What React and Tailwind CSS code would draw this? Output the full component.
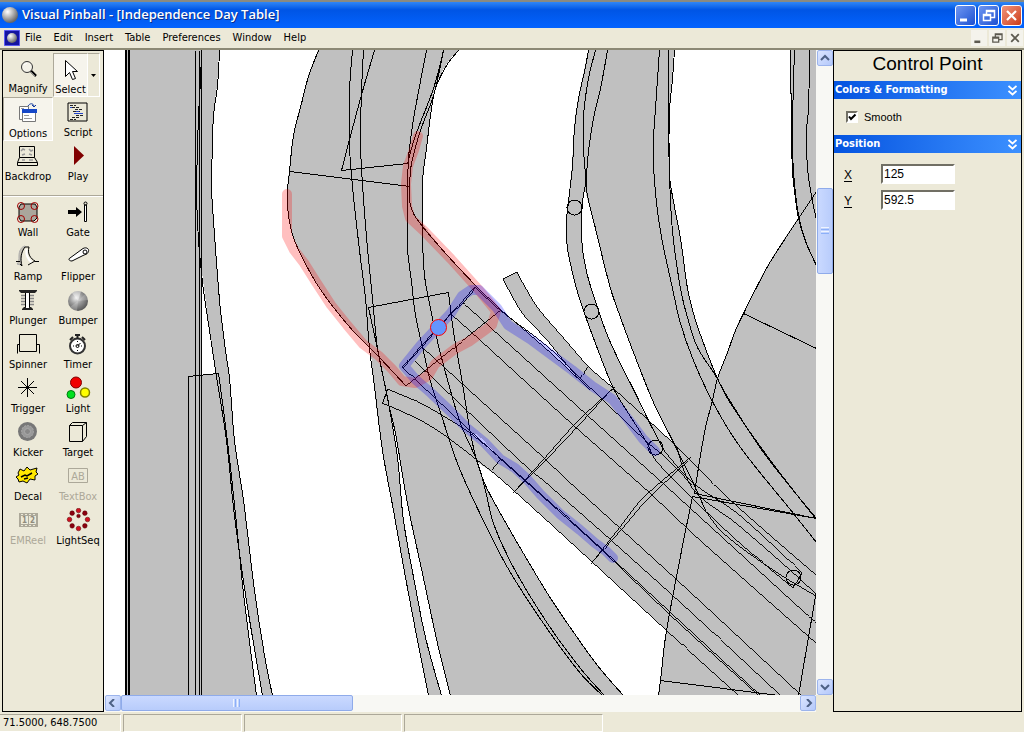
import React, { useState } from "react";

const ink = { fill: "none", stroke: "#000", strokeWidth: 1 };

// white areas between the table parts
const gaps = [
	"104,50 125,50 125,695 104,695",
	"219,50 217,85 213,115 212,145 211,185 213,220 217,275 220,310 225,350 229,378 234,440 243,500 254,590 264,655 272,695 428,695 418,645 405,577 393,510 382,450 373,378 371,350 353,331 330,303 313,278 294,240 288,215 287,191 289,171 293,135 301,103 308,76 318,50",
	"202,272 209,325 216,374 202,375",
	"241,567 248,613 262,695 256,695 243,593",
	"388,403 397,457 403,520 415,587 425,637 441,695 450,695 437,643 422,573 407,503 395,433",
	"458,50 448,62 440,76 434,91 430,115 426,148 422,181 422,223 447,255 475,285 501,310 547,349 578,378 563,360 547,340 530,322 520,310 503,279 517,272 525,287 538,308 567,342 589,367 613,388 595,343 583,310 576,288 567,248 566,221 568,201 572,165 574,128 578,98 584,71 588,50",
	"585,190 582,201 581,225 582,248 586,271 592,292 605,330 615,353 637,397 647,418 673,443 653,402 633,352 620,317 610,288 595,228",
	"674,50 672,78 669,111 669,175 673,201 680,238 687,288 693,313 702,340 717,378 727,352 735,330 743,313 757,285 770,261 798,218 795,198 792,171 791,128 790,50",
	"477,462 502,480 590,560 666,630 660,680 658,695 623,695 597,665 567,623 547,593 523,553 500,513 485,485",
	"470,433 476,434 487,444 499,457 484,445",
];

const rails = [
	// left rails
	"195,50 195,695",
	"199,50 199,695",
	"201,50 201,695",
	"188,695 188,376 218,373 224,417 230,467 237,533 243,593 256,695",
	"201,50 200,80 198,115 197,150 196,190 198,240 200,262 203,290 209,330 216,376 226,440 233,507 240,560 248,613 262,695",
	"219,50 217,85 213,115 212,145 211,185 213,220 217,275 220,310 225,350 229,378 234,440 243,500 254,590 264,655 272,695",
	// upper loop
	"318,50 308,76 301,103 293,135 289,171 287,191 288,215 294,240 313,278 330,303 353,331 377,355 406,386",
	"475,285 447,255 422,226 413,213 409,200 409,186 411,163 420,130 433,95 443,50",
	"289,171 409,186",
	"374,50 360,98 341,170 407,163 415,135 433,88 443,50",
	"352,50 349,91 349,145 351,175 355,215 360,258 365,298 369,348 373,378 382,450 393,510 405,577 418,645 428,695",
	"363,50 361,91 360,145 363,198 367,248 372,298 377,348 383,378 387,397 397,457 403,520 415,587 425,637 441,695",
	"426,50 418,91 412,125 408,158 407,198 407,248 411,281 415,315 423,351 430,381 440,412 457,463 478,510 507,567 543,623 580,673 602,695",
	"458,50 448,62 440,76 434,91 430,115 426,148 422,181 422,235 424,275 430,308 437,341 448,383 460,423 477,462 485,490 493,523 513,567 547,623 580,668 604,695",
	"450,695 437,643 422,573 407,503 395,433 388,403 379,358 368,307 448,292 453,331 462,383 470,433 477,463 485,485 500,513 523,553 547,593 567,623 597,665 623,695",
	// orbit lane
	"588,50 584,71 578,98 574,128 572,165 568,201 566,221 567,248 576,288 583,310 595,343 613,388 628,413 645,440 653,457",
	"607,50 600,88 593,118 588,151 586,175 586,190 595,228 610,288 620,317 633,352 653,402 672,440 693,483 705,510",
	"595,50 588,78 583,115 583,148 585,181 582,201 581,225 582,248 586,271 592,292 605,330 615,353 637,397 647,418 663,449",
	"659,50 655,108 653,141 654,181 660,231 672,288 680,323 693,360 713,403 740,447 793,513 816,542",
	"668,50 669,171 672,231 680,288 687,317 697,347 715,375 730,403 773,464 816,519",
	"674,50 672,78 669,111 669,175 673,201 680,238 687,288 693,313 702,340 717,378 728,398 763,452 816,518",
	// right wall
	"790,50 791,128 792,171 795,198 798,218 805,241 816,265",
	"794,50 792,128 793,171 798,215 806,243 816,264",
	"809,50 808,108 806,131 807,168 811,195 816,220",
	"816,191 798,218 770,261 757,285 743,313 735,330 727,352 717,378 712,400 705,427 698,467 694,493 816,518 692,496 666,630 660,680 658,695",
	"743,313 816,348",
	"660,680 778,695",
	"816,590 798,695",
	"382,403 387,389",
];

const ramp = [
	// guide below the ramp
	"500,458 470,433 450,420 420,403 387,389",
	"382,403 420,420 447,437 477,460 502,480 590,560 666,630 738,695",
	"500,460 492,470",
	"402,367 475,287",
	"403,368 422,347 451,314 463,303 475,288",
	"406,386 501,310",
	"475,285 501,310",
	"475,287 501,311 547,346 580,378 603,400 648,443 664,456 692,485",
	"501,310 553,355 590,390",
	"463,303 480,318 587,415 667,487 816,623",
	"451,314 480,340 573,425 650,493 692,533 816,643",
	"422,347 480,400 543,457 567,480 677,580 801,695",
	"415,361 480,423 530,470 543,480 670,593 780,695",
	"402,367 480,440 498,456 570,520 603,550 670,612 760,695",
	"498,457 570,521 603,551 668,613 758,695",
	"615,387 577,422 543,460 513,493",
	"612,389 580,424 545,461 515,491",
	"691,457 643,498 620,527 591,564",
	"688,461 645,502 622,529 593,561",
	// guide above the ramp
	"578,378 563,360 547,340 530,322 520,310 503,279 517,272 525,287 538,308 567,342 589,367 613,388 647,419 675,445 727,497 816,575",
	"588,367 580,378",
	"653,457 667,473 733,537 793,588 802,573 737,513 693,483 663,449",
	"705,510 723,533 773,570 816,596",
	"677,447 693,489 737,524 790,570 816,594",
];

const posts = [
	[574, 207],
	[591, 311],
	[655, 447],
	[793, 577],
];

// rounds gentle bends between points, keeps sharp corners sharp
function curve(str) {
	const pts = str.split(" ").map((p) => p.split(",").map(Number));
	const tangents = pts.map((p, i) => {
		const a = pts[i - 1];
		const b = pts[i + 1];
		if (!a || !b) return null;
		const turn = Math.atan2(b[1] - p[1], b[0] - p[0]) - Math.atan2(p[1] - a[1], p[0] - a[0]);
		if (Math.cos(turn) < 0.82) return null;
		const len = Math.hypot(b[0] - a[0], b[1] - a[1]);
		return [(b[0] - a[0]) / len, (b[1] - a[1]) / len];
	});
	let d = `M${pts[0]}`;
	for (let i = 1; i < pts.length; i++) {
		const [p, q] = [pts[i - 1], pts[i]];
		const k = Math.hypot(q[0] - p[0], q[1] - p[1]) / 3;
		const s = tangents[i - 1] || [0, 0];
		const e = tangents[i] || [0, 0];
		d += `C${p[0] + s[0] * k},${p[1] + s[1] * k} ${q[0] - e[0] * k},${q[1] - e[1] * k} ${q}`;
	}
	return d;
}

function TableCanvas() {
	return (
		<svg
			viewBox="104 50 712 645"
			preserveAspectRatio="xMinYMin slice"
			className="block h-full w-full bg-[#c0c0c0]"
			role="img"
			aria-label="Table layout">
			<g shapeRendering="crispEdges">
				{gaps.map((p) => (
					<path key={p} d={curve(p) + "Z"} fill="#fff" />
				))}
				<path d="M126 50V695M129 50V695" stroke="#000" strokeWidth="2" />
				<g transform="translate(0.5 0.5)" {...ink}>
					{rails.map((p) => (
						<path key={p} d={curve(p)} />
					))}
					{posts.map(([x, y]) => (
						<circle key={x} cx={x} cy={y} r="7.5" />
					))}
				</g>
				<g {...ink} strokeWidth="0.95">
					{ramp.map((p) => (
						<path key={p} d={curve(p)} />
					))}
				</g>
			</g>
			<g fill="none" strokeWidth="10" strokeLinecap="round" strokeLinejoin="round" opacity="0.25">
				<path
					stroke="#f00"
					d="M287 194V236L294 250 304 263 316 282 331 305 347 325 363 344 379 356 392 369 402 381 415 383 428 376 435 364 455 349 470 341 492 325 496 311 478 289 451 259 424 231 410 218 407 206 406 184 408 166 414 150 418 136"
				/>
			</g>
			<g fill="none" strokeWidth="10" strokeLinecap="round" strokeLinejoin="round" opacity="0.25">
				<path
					stroke="#00f"
					d="M655 451L643 439 628 419 612 399 592 386 572 370 553 356 530 339 508 325 497 308 479 290 471 290 462 296 451 313 436 329 421 345 404 366 416 380 431 393 450 411 467 428 484 442 500 459 515 468 527 479 540 494 560 514 580 530 595 543 606 551 613 558"
				/>
			</g>
			<circle cx="438.5" cy="327.5" r="8" fill="#6495ff" stroke="#f00" />
		</svg>
	);
}

const icons = {
	Magnify: (
		<>
			<circle cx="14" cy="11" r="5.5" fill="#f4f2e8" stroke="#333" />
			<path d="M11 9l3-2" stroke="#fff" />
			<path d="M18 15l5 5" stroke="#000" strokeWidth="2.5" />
			<path d="M18 16l4 4" stroke="#888" />
		</>
	),
	Select: <path d="M9.5 3.5v16l4-4 3 7 3-1-3-7h5z" fill="#fff" stroke="#000" />,
	Options: (
		<>
			<path d="M6.5 5.5h9v13h-9z" fill="#fff" stroke="#777" />
			<path d="M9.5 9.5h13v11h-13z" fill="#fff" stroke="#777" />
			<path d="M9 8h15v4H9z" fill="#1648c8" />
			<path d="M11 14.5h5M11 17.5h8M8 7.5h3" stroke="#999" />
			<path d="M15 5c2-3 5-3 6 0m-2-1l2 2 2-2" fill="none" stroke="#123a9c" />
		</>
	),
	Script: (
		<>
			<path d="M5 3h19v18H5z" {...ink} />
			<path d="M7 5.5h6M9 7.5h7M12 9.5h8M10 11.5h7M13 15.5h8M9 17.5h7M7 19.5h6" stroke="#222" strokeDasharray="3 1" />
			<path d="M7 7.5h2M13 11.5h3M11 13.5h9" stroke="#24c" />
		</>
	),
	Backdrop: (
		<>
			<path d="M6.5 2.5h15v11h-15zM6.5 13.5l-2 5v3h20v-3l-3-5M4.5 18.5h20" {...ink} />
			<path d="M8 7l2-2 2 1M16 5l2 2 2-1M9 11l3-1M16 10l3 1M9 16h3M16 16h4" fill="none" stroke="#999" strokeWidth="1.5" />
		</>
	),
	Play: <path d="M11 2v19l10-9.5z" fill="#800000" />,
	Wall: (
		<>
			<path d="M8 4h14l2 3v11l-3 3H8l-2-3V7z" fill="#aaa69c" stroke="#000" />
			<g fill="none" stroke="#a00000">
				<circle cx="8" cy="6" r="3.5" />
				<circle cx="21.5" cy="6" r="3.5" />
				<circle cx="8" cy="19" r="3.5" />
				<circle cx="21.5" cy="19" r="3.5" />
			</g>
		</>
	),
	Gate: (
		<>
			<path d="M5 10h8V7l6 5-6 5v-3H5z" fill="#000" />
			<path d="M21.5 5v16.5h2V5z" fill="#fff" stroke="#000" />
			<circle cx="22.5" cy="3.5" r="1.5" {...ink} />
		</>
	),
	Ramp: (
		<>
			<path d="M12 2C8 3 6 7 6 12c0 4 0 6-2 8l4 1c-1-6 0-13 4-19z" fill="#c5c1b4" stroke="#aaa" />
			<path d="M3 17.5h4M12 3c-4 5-5 12-3 19M9 22l-2-2M12 3h4c-2 7 2 12 6 14l-7 4M22 17.5h4" {...ink} />
			<path d="M13.5 5c-1 6 2 11 5 13" fill="none" stroke="#fff" strokeWidth="2" />
		</>
	),
	Flipper: (
		<>
			<path d="M7 14L20 4.5c4-2 7 1 5 4-1 2-3 2-5 3L9 17c-3 0-4-2-2-3z" fill="#fff" stroke="#000" />
			<circle cx="22" cy="8" r="2" {...ink} />
		</>
	),
	Plunger: (
		<>
			<path d="M6 2h18v1l-2 2H8L6 3zM9 22h11v-1l-2-2h-7l-2 2z" fill="#222" />
			<path d="M8 7.5h13M8 10.5h13M8 13.5h13M8 16.5h13" stroke="#888" strokeWidth="1.5" />
			<path d="M14.5 5v15" stroke="#fff" strokeWidth="3" />
			<path d="M12.5 5v14M16.5 5v14" stroke="#000" />
		</>
	),
	Bumper: (
		<>
			<defs>
				<radialGradient id="cap" cx="0.4" cy="0.35" r="0.65">
					<stop offset="0" stopColor="#f0f0f0" />
					<stop offset="0.5" stopColor="#999" />
					<stop offset="1" stopColor="#5a5a5a" />
				</radialGradient>
			</defs>
			<circle cx="15" cy="13" r="10" fill="url(#cap)" />
			<path d="M15 13L9 5A10 10 0 0 1 18 3.500z" fill="#fff" opacity="0.4" />
			<path d="M15 13L22 6A10 10 0 0 1 25 12z" fill="#fff" opacity="0.2" />
			<path d="M15 13L14 23A10 10 0 0 1 7 19z" fill="#fff" opacity="0.2" />
		</>
	),
	Spinner: <path d="M6.5 2.5h17v17h-17zM6.5 12.5h-2v9M23.5 12.5h3v9" {...ink} />,
	Timer: (
		<>
			<circle cx="14.5" cy="14" r="7.5" fill="#fff" stroke="#333" strokeWidth="2" />
			<path d="M12 3h5M14.5 2v5M7 8l3-3M22 8l-3-3" stroke="#222" strokeWidth="2" />
			<path d="M14.5 9v1M14.5 18v1M10 14h1M18 14h1M14.5 14l3-3" stroke="#000" />
			<circle cx="14.5" cy="14" r="1.5" {...ink} />
		</>
	),
	Trigger: <path d="M14.5 2v19M5 11.5h19M8 5l13 13M21 5L8 18" {...ink} />,
	Light: (
		<>
			<circle cx="13" cy="6.5" r="5.5" fill="#f00000" stroke="#800000" />
			<circle cx="8" cy="18.5" r="4" fill="#00e020" stroke="#007a10" />
			<circle cx="22" cy="16.5" r="4.5" fill="#ff0" stroke="#808000" strokeWidth="1.5" />
		</>
	),
	Kicker: (
		<>
			<circle cx="14.5" cy="11.5" r="9.5" fill="#777" />
			<circle cx="14.5" cy="11.5" r="6" fill="#999" stroke="#aaa" strokeDasharray="2 1" />
			<circle cx="14.5" cy="11.5" r="3" fill="#888" stroke="#aaa" />
		</>
	),
	Target: <path d="M6.5 5.5h13v16h-13zM6.5 5.5l3-3h14l-4 3M23.5 2.5v14l-4 5" {...ink} />,
	Decal: (
		<>
			<path d="M5 9l2-4 4 2 3-4 3 3 7-2-1 4 2 2-3 2 0 4-5-1-3 4-4-2-4 1-1-3-2-2 3-2z" fill="#ffe800" stroke="#000" />
			<path d="M8 13l4-2 2 1 5-3M11 15l4-1" {...ink} strokeWidth="1.5" />
		</>
	),
	TextBox: (
		<>
			<path d="M5.5 4.5h19v14h-19z" fill="none" stroke="#aca899" />
			<text x="15" y="16" textAnchor="middle" fontSize="11" fill="#aca899">
				AB
			</text>
		</>
	),
	EMReel: (
		<>
			<path d="M6 5h19v14H6z" fill="#aca899" />
			<path d="M8 8h7v8H8zM16 8h7v8h-7z" fill="#ece9d8" />
			<path d="M8 6.5h16M8 17.5h16" stroke="#ece9d8" strokeDasharray="2 2" />
			<text x="11.5" y="15" textAnchor="middle" fontSize="8" fontWeight="bold" fill="#8f8b7d">
				1
			</text>
			<text x="19.5" y="15" textAnchor="middle" fontSize="8" fontWeight="bold" fill="#8f8b7d">
				2
			</text>
		</>
	),
	LightSeq: (
		<g fill="#8b0010" stroke="#500" strokeWidth="0.5">
			{[0, 1, 2, 3, 4, 5, 6, 7].map((i) => (
				<circle
					key={i}
					cx={15.5 + 9 * Math.cos((i * Math.PI) / 4)}
					cy={11.5 + 9 * Math.sin((i * Math.PI) / 4)}
					r="2.3"
					fill={i % 2 ? "#8b0010" : "#d01020"}
				/>
			))}
			<circle cx="15.5" cy="8" r="1.8" />
		</g>
	),
};

const disabledTools = ["TextBox", "EMReel"];

function Tool({ name, className = "" }) {
	const off = disabledTools.includes(name);
	return (
		<button
			type="button"
			disabled={off}
			className={`flex h-11 flex-col items-center pt-[3px] ${off ? "text-[#aca899]" : ""} ${className}`}>
			<svg width="30" height="26" viewBox="0 0 30 26" className="shrink-0" aria-hidden="true">
				{icons[name]}
			</svg>
			<span className="leading-[13px]">{name}</span>
		</button>
	);
}

const parts = [
	"Wall",
	"Gate",
	"Ramp",
	"Flipper",
	"Plunger",
	"Bumper",
	"Spinner",
	"Timer",
	"Trigger",
	"Light",
	"Kicker",
	"Target",
	"Decal",
	"TextBox",
	"EMReel",
	"LightSeq",
];

function Toolbar() {
	return (
		<aside className="w-[102px] shrink-0 border border-black bg-[#ece9d8]">
			<div className="grid grid-cols-2 border-b border-[#aca899] pt-0.5 pb-2.5">
				<Tool name="Magnify" />
				<div className="flex">
					<Tool name="Select" className="w-[35px] border border-[#aca899] border-r-white border-b-white bg-[#f6f4ec]" />
					<button
						type="button"
						aria-label="Select options"
						className="flex h-11 w-3 items-center justify-center border border-l-0 border-[#aca899] border-r-white border-b-white">
						<svg width="5" height="3" viewBox="0 0 5 3" aria-hidden="true">
							<path d="M0 0h5L2.5 3z" />
						</svg>
					</button>
				</div>
				<Tool name="Options" className="border border-[#aca899] border-r-white border-b-white bg-[#f6f4ec]" />
				<Tool name="Script" />
				<Tool name="Backdrop" />
				<Tool name="Play" />
			</div>
			<div className="grid grid-cols-2 border-t border-white">
				{parts.map((name) => (
					<Tool key={name} name={name} />
				))}
			</div>
		</aside>
	);
}

const arrows = {
	up: "M2 6l4-4 4 4",
	down: "M2 2l4 4 4-4",
	left: "M7 0L3 4l4 4",
	right: "M5 0l4 4-4 4",
};

function ScrollButton({ dir }) {
	return (
		<button
			type="button"
			aria-label={`Scroll ${dir}`}
			className="flex size-4 shrink-0 items-center justify-center rounded-xs border border-[#9cb4ec] bg-linear-to-br from-[#dce6ff] to-[#b4c8fa]">
			<svg width="12" height="8" viewBox="0 0 12 8" aria-hidden="true">
				<path d={arrows[dir]} fill="none" stroke="#4d6185" strokeWidth="2" />
			</svg>
		</button>
	);
}

function Canvas() {
	return (
		<main className="grid min-w-0 flex-1 grid-cols-[minmax(0,1fr)_17px] grid-rows-[minmax(0,1fr)_17px]">
			<TableCanvas />
			<div className="flex flex-col items-end bg-[#f8f8f4]">
				<ScrollButton dir="up" />
				<div className="grow-[122]" />
				<div className="flex w-4 grow-[85] basis-0 flex-col items-center justify-center gap-px rounded-xs border border-[#8fabea] bg-linear-to-r from-[#cad9ff] to-[#b8ccfb]">
					<i className="h-px w-2 bg-[#eef4fe]" />
					<i className="h-px w-2 bg-[#8cb0f8]" />
					<i className="h-px w-2 bg-[#eef4fe]" />
					<i className="h-px w-2 bg-[#8cb0f8]" />
				</div>
				<div className="grow-[406]" />
				<ScrollButton dir="down" />
			</div>
			<div className="flex items-start bg-[#f8f8f4] pl-px">
				<ScrollButton dir="left" />
				<div className="flex h-4 grow-[231] basis-0 items-center justify-center gap-px rounded-xs border border-[#8fabea] bg-linear-to-b from-[#cad9ff] to-[#b8ccfb]">
					<i className="h-2 w-px bg-[#eef4fe]" />
					<i className="h-2 w-px bg-[#8cb0f8]" />
					<i className="h-2 w-px bg-[#eef4fe]" />
					<i className="h-2 w-px bg-[#8cb0f8]" />
				</div>
				<div className="grow-[449]" />
				<ScrollButton dir="right" />
			</div>
			<div className="bg-[#ece9d8]" />
		</main>
	);
}

function SectionTitle({ children }) {
	return (
		<button
			type="button"
			className="flex h-[18px] w-full items-center justify-between bg-linear-to-r from-[#0453e0] to-[#3c90ff] pr-1 pl-px font-bold text-white">
			{children}
			<svg width="9" height="11" viewBox="0 0 9 11" aria-hidden="true">
				<path d="M0.5 1l4 3.5 4-3.5M0.5 6l4 3.5 4-3.5" fill="none" stroke="#fff" strokeWidth="1.8" />
			</svg>
		</button>
	);
}

function Field({ label, value, onChange }) {
	return (
		<label className="flex h-[26px] items-start font-['Liberation_Sans',sans-serif] text-[12px]">
			<span className="w-[37px] pt-[3px] leading-4 underline underline-offset-2">{label}</span>
			<input
				value={value}
				onChange={(e) => onChange(e.target.value)}
				className="h-5 w-[74px] border-2 border-[#716f64] border-r-white border-b-white bg-white px-px leading-4 outline-none"
			/>
		</label>
	);
}

function Properties() {
	const [smooth, setSmooth] = useState(true);
	const [x, setX] = useState("125");
	const [y, setY] = useState("592.5");

	return (
		<aside className="mr-0.5 w-[189px] shrink-0 border border-black bg-[#ece9d8]">
			<h1 className="h-[30px] text-center font-['Liberation_Sans',sans-serif] text-[19px] leading-[26px]">
				Control Point
			</h1>
			<SectionTitle>Colors &amp; Formatting</SectionTitle>
			<label className="flex h-9 items-center gap-1.5 pl-3 font-['Liberation_Sans',sans-serif]">
				<span className="grid">
					<input
						type="checkbox"
						checked={smooth}
						onChange={(e) => setSmooth(e.target.checked)}
						className="peer col-start-1 row-start-1 size-3 appearance-none border-2 border-[#716f64] border-r-white border-b-white bg-white"
					/>
					<svg
						viewBox="0 0 12 12"
						className="pointer-events-none invisible col-start-1 row-start-1 size-3 peer-checked:visible"
						aria-hidden="true">
						<path d="M3 5.5l2 2.5 4.5-4.5" fill="none" stroke="#000" strokeWidth="2" />
					</svg>
				</span>
				Smooth
			</label>
			<SectionTitle>Position</SectionTitle>
			<div className="pt-[11px] pl-2.5">
				<Field label="X" value={x} onChange={setX} />
				<Field label="Y" value={y} onChange={setY} />
			</div>
		</aside>
	);
}

const glyphs = {
	Minimize: <path d="M4 14h7" strokeWidth="3" />,
	Restore: <path d="M7.5 8V4.5h8v7H12M4.5 8.5h7v6h-7zM4.5 9.5h7M7.5 5.5h8" strokeWidth="1.5" />,
	Close: <path d="M5 5l9 9M14 5l-9 9" strokeWidth="2.2" />,
};

function TitleBar() {
	return (
		<header className="flex h-7 shrink-0 items-center border-t-2 border-[#8a8a80] bg-linear-to-b from-[#2f86f5] via-[#0055e5] via-30% to-[#0363ff] px-0.5 text-white">
			<svg width="18" height="18" viewBox="0 0 18 18" aria-hidden="true">
				<defs>
					<radialGradient id="ball" cx="0.35" cy="0.3" r="0.7">
						<stop offset="0" stopColor="#fff" />
						<stop offset="0.4" stopColor="#c4c4c4" />
						<stop offset="1" stopColor="#666" />
					</radialGradient>
				</defs>
				<circle cx="8" cy="9" r="8" fill="url(#ball)" />
			</svg>
			<span className="flex-1 truncate pl-0.5 font-['Open_Sans','Noto_Sans',sans-serif] text-[13px] font-semibold [text-shadow:1px_1px_0_#0b2f8a]">
				Visual Pinball - [Independence Day Table]
			</span>
			<div className="flex gap-0.5">
				{Object.entries(glyphs).map(([name, glyph]) => (
					<button
						key={name}
						type="button"
						aria-label={name}
						className={`flex size-[21px] items-center justify-center rounded-[3px] border border-white bg-linear-to-br ${
							name === "Close" ? "from-[#f0937a] to-[#cc3a10]" : "from-[#6f96f2] to-[#1c4fd0]"
						}`}>
						<svg width="19" height="19" viewBox="0 0 19 19" fill="none" stroke="#fff" aria-hidden="true">
							{glyph}
						</svg>
					</button>
				))}
			</div>
		</header>
	);
}

function MenuBar() {
	return (
		<nav className="flex h-5 shrink-0 items-center pr-px pl-1">
			<svg width="16" height="16" viewBox="0 0 16 16" className="mr-1" aria-hidden="true">
				<path d="M0.5 0.5h15v15H0.5z" fill="#1414a0" stroke="#5a5af0" />
				<circle cx="8" cy="8" r="5" fill="url(#ball)" />
			</svg>
			<div className="flex flex-1">
				{["File", "Edit", "Insert", "Table", "Preferences", "Window", "Help"].map((item) => (
					<button key={item} type="button" className="px-1.5 first:pl-px">
						{item}
					</button>
				))}
			</div>
			<div className="flex gap-0.5">
				{Object.entries(glyphs).map(([name, glyph]) => (
					<button
						key={name}
						type="button"
						aria-label={`${name} table`}
						className="flex size-4 items-center justify-center bg-[#f4f3ec]">
						<svg width="16" height="16" viewBox="0 0 19 19" fill="none" stroke="#5c5a50" aria-hidden="true">
							{glyph}
						</svg>
					</button>
				))}
			</div>
		</nav>
	);
}

function StatusBar() {
	const pane = "h-[18px] border border-[#aca899] border-r-white border-b-white";
	return (
		<footer className="flex shrink-0 gap-0.5 border-b-2 border-white pt-0.5">
			<div className={`${pane} w-[121px] border-l-0 pl-[3px] leading-4`}>71.5000, 648.7500</div>
			<div className={`${pane} w-[119px]`} />
			<div className={`${pane} w-[158px]`} />
			<div className={`${pane} w-[199px]`} />
		</footer>
	);
}

export default function App() {
	return (
		<div className="flex h-screen flex-col overflow-hidden bg-[#ece9d8] font-['DejaVu_Sans_Condensed','Noto_Sans',sans-serif] text-[11px] text-black">
			<TitleBar />
			<MenuBar />
			<div className="flex min-h-0 flex-1 border-t-2 border-[#8c8975] pl-0.5">
				<Toolbar />
				<Canvas />
				<Properties />
			</div>
			<StatusBar />
		</div>
	);
}
